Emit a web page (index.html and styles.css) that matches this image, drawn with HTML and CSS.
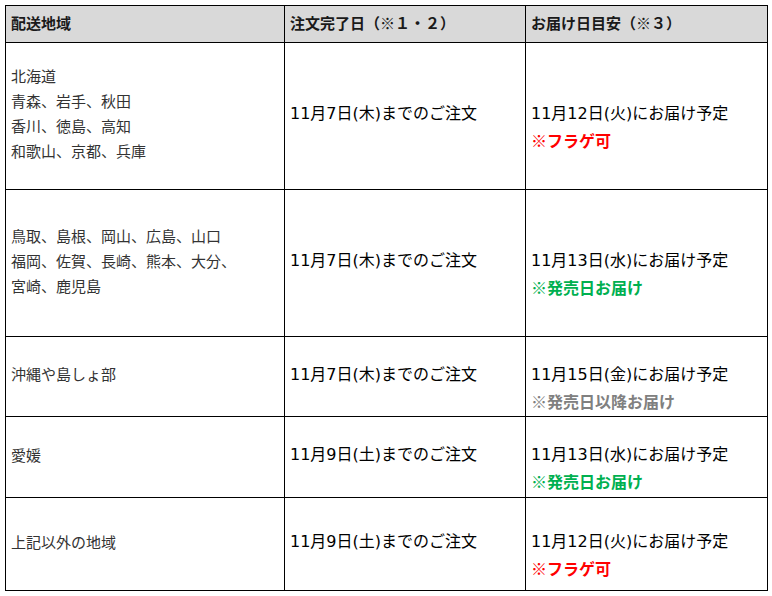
FILE: index.html
```html
<!DOCTYPE html>
<html lang="ja">
<head>
<meta charset="utf-8">
<link rel="stylesheet" href="styles.css">
</head>
<body>
<table class="ship">
  <colgroup>
    <col class="c1"><col class="c2"><col class="c3">
  </colgroup>
  <thead>
    <tr class="head">
      <th>配送地域</th>
      <th>注文完了日（※１・２）</th>
      <th>お届け日目安（※３）</th>
    </tr>
  </thead>
  <tbody>
    <tr class="r-147">
      <td class="area">北海道<br>青森、岩手、秋田<br>香川、徳島、高知<br>和歌山、京都、兵庫</td>
      <td class="order">11月7日(木)までのご注文</td>
      <td class="deliv"><span class="when">11月12日(火)にお届け予定</span><span class="note red">※フラゲ可</span></td>
    </tr>
    <tr class="r-147">
      <td class="area">鳥取、島根、岡山、広島、山口<br>福岡、佐賀、長崎、熊本、大分、<br>宮崎、鹿児島</td>
      <td class="order">11月7日(木)までのご注文</td>
      <td class="deliv"><span class="when">11月13日(水)にお届け予定</span><span class="note green">※発売日お届け</span></td>
    </tr>
    <tr class="r-80">
      <td class="area">沖縄や島しょ部</td>
      <td class="order">11月7日(木)までのご注文</td>
      <td class="deliv"><span class="when">11月15日(金)にお届け予定</span><span class="note gray">※発売日以降お届け</span></td>
    </tr>
    <tr class="r-81">
      <td class="area">愛媛</td>
      <td class="order">11月9日(土)までのご注文</td>
      <td class="deliv"><span class="when">11月13日(水)にお届け予定</span><span class="note green">※発売日お届け</span></td>
    </tr>
    <tr class="r-93">
      <td class="area">上記以外の地域</td>
      <td class="order">11月9日(土)までのご注文</td>
      <td class="deliv"><span class="when">11月12日(火)にお届け予定</span><span class="note red">※フラゲ可</span></td>
    </tr>
  </tbody>
</table>
</body>
</html>
```

FILE: styles.css
```css
html, body {
  margin: 0;
  padding: 0;
  background: #fff;
}

body {
  font-family: "DejaVu Sans", "Noto Sans CJK JP", sans-serif;
  font-size: 16px;
  color: #000;
}

.ship {
  margin: 5px 0 0 5px;
  width: 762px;
  table-layout: fixed;
  border-collapse: collapse;
}

.c1 { width: 279px; }
.c2 { width: 241px; }
.c3 { width: 242px; }

.ship th,
.ship td {
  border: 1px solid #000;
  padding: 0 0 4px 5px;
  text-align: left;
  vertical-align: middle;
}

.head { height: 37px; }
.r-147 { height: 147px; }
.r-80 { height: 80px; }
.r-81 { height: 81px; }
.r-93 { height: 93px; }

.ship .head th {
  background: #d9d9d9;
  font-family: "Noto Sans CJK JP", sans-serif;
  font-weight: bold;
  font-size: 15px;
  color: #1a1a1a;
  line-height: 20px;
  padding-bottom: 2px;
}

.ship .area {
  font-family: "Noto Sans CJK JP", sans-serif;
  color: #333;
  line-height: 25px;
  font-size: 15px;
  padding-bottom: 6px;
}

.order {
  line-height: 26px;
}

.ship .deliv {
  line-height: 26px;
  padding-top: 22px;
  padding-bottom: 0;
}

.when {
  display: block;
  height: 26px;
}

.note {
  display: block;
  height: 26px;
  font-family: "Noto Sans CJK JP", sans-serif;
  font-weight: bold;
  font-size: 16px;
  line-height: 26px;
}

.red { color: #ff0000; }
.green { color: #00b050; }
.gray { color: #808080; }
```
